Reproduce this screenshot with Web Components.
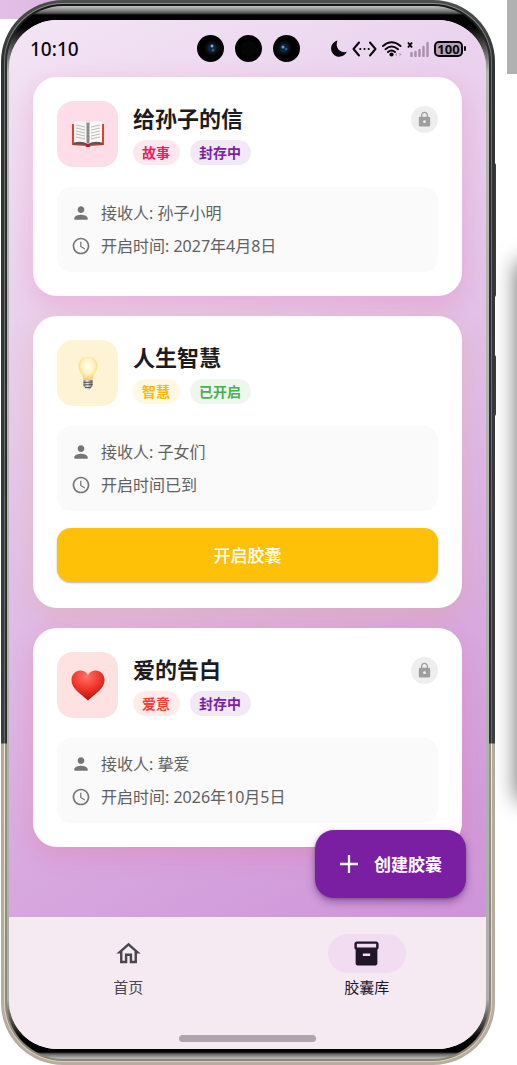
<!DOCTYPE html>
<html lang="zh-CN">
<head>
<meta charset="utf-8">
<meta name="viewport" content="width=device-width, initial-scale=1">
<title>胶囊库</title>
<style>
  * { box-sizing: border-box; }
  body { margin: 0; background: #fff; overflow-x: hidden; font-family: "Noto Sans CJK SC", "Noto Sans", sans-serif; color: #1d1b20; }
</style>
</head>
<body>
<desk-backdrop>
  <phone-frame>
    <status-bar slot="status" time="10:10" battery="100"></status-bar>
    <capsule-list>
      <capsule-card title-text="给孙子的信" kind="story" tag="故事" state="sealed" state-text="封存中" to="接收人: 孙子小明" when="开启时间: 2027年4月8日">
        <emoji-book slot="icon"></emoji-book>
      </capsule-card>
      <capsule-card title-text="人生智慧" kind="wisdom" tag="智慧" state="open" state-text="已开启" to="接收人: 子女们" when="开启时间已到">
        <emoji-bulb slot="icon"></emoji-bulb>
        <open-button slot="action">开启胶囊</open-button>
      </capsule-card>
      <capsule-card title-text="爱的告白" kind="love" tag="爱意" state="sealed" state-text="封存中" to="接收人: 挚爱" when="开启时间: 2026年10月5日">
        <emoji-heart slot="icon"></emoji-heart>
      </capsule-card>
      <create-button slot="fab">创建胶囊</create-button>
    </capsule-list>
    <bottom-nav slot="nav">
      <nav-item icon="home">首页</nav-item>
      <nav-item icon="box" active>胶囊库</nav-item>
    </bottom-nav>
  </phone-frame>
</desk-backdrop>

<script>
function define(name, html, setup) {
  customElements.define(name, class extends HTMLElement {
    constructor() {
      super();
      const root = this.attachShadow({ mode: "open" });
      const tpl = document.createElement("template");
      tpl.innerHTML = "<style>*{box-sizing:border-box}</style>" + html;
      root.append(tpl.content.cloneNode(true));
    }
    connectedCallback() { if (setup) setup(this, this.shadowRoot); }
  });
}

define("desk-backdrop", `
<style>
  :host { display: block; position: relative; padding: 0 22px 0 1px; overflow: hidden; }
  .strip { position: absolute; left: 0; top: 0; width: 108px; height: 19px; background: linear-gradient(90deg, #e3bfe6, #d8b0e0); }
  .block { position: absolute; right: 0; top: 0; width: 10px; height: 74px; background: #b1b1b1; }
  .neighbour { position: absolute; left: 100%; top: 262px; width: 40px; height: 538px; box-shadow: 0 0 22px 0 rgba(0,0,0,.6); }
  .rocker { position: absolute; right: 21px; width: 4px; background: #3a3d40; border-radius: 2px; }
  .up { top: 163px; height: 134px; }
  .power { top: 355px; height: 61px; }
  .front { position: relative; }
</style>
<div class="strip"></div><div class="block"></div><div class="neighbour"></div>
<div class="rocker up"></div><div class="rocker power"></div>
<div class="front"><slot></slot></div>`);

define("phone-frame", `
<style>
  :host { display: block; }
  .shell { border-radius: 62px; padding: 3px;
    background: linear-gradient(180deg, #4c4f4d 0, #303234 60px, #3b3d40 743px, #b3aa9b 744px, #b8ae9f 100%); }
  .rim { border-radius: 59px; padding: 1px;
    background: linear-gradient(180deg, #8a8d8b 0, #6d7072 60px, #66696c 740px, #f3ecdf 741px, #d8cfc0 100%); }
  .band { border-radius: 58px; padding: 2px;
    background: linear-gradient(180deg, #151616 0, #2d2f31 60px, #2d2f31 739px, #989080 740px, #8d8576 100%); }
  .bezel { border-radius: 56px; padding: 14px 3px 10px 2px;
    background: linear-gradient(180deg, #c4c4c4 0, #8c8c8c 4px, #555 7px, #000 9px, #000 20px, #b4b6b2 66px, #aeb0ac calc(100% - 60px), #000 calc(100% - 20px), #000 calc(100% - 7px), #666 calc(100% - 5px), #c2c2c2 100%); }
  .screen { position: relative; border-radius: 48px; overflow: hidden; background: #f5eaf2; }
  .view { background: linear-gradient(152deg, #f3e5f5 0%, #e1bee7 50%, #ce93d8 100%); }
</style>
<div class="shell"><div class="rim"><div class="band"><div class="bezel"><div class="screen">
  <div class="view"><slot name="status"></slot><slot></slot></div>
  <slot name="nav"></slot>
</div></div></div></div></div>`);

define("status-bar", `
<style>
  :host { display: grid; grid-template-columns: 1fr auto 1fr; align-items: center; height: 57px; padding: 0 20px 0 21px; color: #0b080c; }
  .time { font: 500 19px/24px "Noto Sans", sans-serif; }
  .cams { display: flex; gap: 11px; }
  .cams svg { display: block; width: 27px; height: 27px; }
  .icons { display: flex; align-items: center; justify-content: flex-end; gap: 5px; }
  .icons svg { display: block; flex: none; }
  .battery { display: flex; align-items: center; }
  .level { width: 29px; height: 16px; border: 2px solid #0b080c; border-radius: 5px; background: #b5a3b8; text-align: center; font: 700 13px/12px "Noto Sans", sans-serif; display: flex; justify-content: center; align-items: center; }
  .cap { width: 2px; height: 5px; margin-left: 1px; background: #0b080c; border-radius: 1px; }
</style>
<span class="time"></span>
<div class="cams">
  <svg viewBox="0 0 27 27"><circle cx="13.500" cy="13.500" r="13.500"/><circle cx="15" cy="13" r="7" fill="#0a0e13"/><circle cx="15" cy="13" r="4.500" fill="#10233a"/><circle cx="15" cy="11" r="1.500" fill="#6fb0e8"/><circle cx="16" cy="15" r="1.500" fill="#275b94"/></svg>
  <svg viewBox="0 0 27 27"><circle cx="13.500" cy="13.500" r="13.500"/><circle cx="13.500" cy="13.500" r="8" fill="#050505"/></svg>
  <svg viewBox="0 0 27 27"><circle cx="13.500" cy="13.500" r="13.500"/><circle cx="11" cy="13" r="7" fill="#0a0e13"/><circle cx="11" cy="13" r="4.500" fill="#10233a"/><circle cx="10" cy="12" r="1.500" fill="#5f9dd8"/><circle cx="13" cy="14" r="1.300" fill="#275b94"/></svg>
</div>
<div class="icons">
  <svg width="16" height="17" viewBox="0 0 16 17"><path d="M6.500 0.500A8.200 8.200 0 1 0 15.800 11.800C9.500 13.800 3.500 7.500 6.500 0.500Z" fill="currentColor"/></svg>
  <svg width="25" height="16" viewBox="0 0 25 16"><path d="M7 1.500L1.500 8L7 14.500M18 1.500L23.500 8L18 14.500" fill="none" stroke="currentColor" stroke-width="2" stroke-linecap="round" stroke-linejoin="round"/><circle cx="8.300" cy="8" r="1.100"/><circle cx="12.500" cy="8" r="1.100"/><circle cx="16.700" cy="8" r="1.100"/></svg>
  <svg width="20" height="16" viewBox="0 0 20 16"><path d="M1 5Q9.500 -2.500 18.500 5M3.500 8.200Q9.500 2.800 16 8.200M6 11Q9.500 8 13 11" fill="none" stroke="currentColor" stroke-width="2" stroke-linecap="round"/><circle cx="9.500" cy="13.500" r="2.100"/><path d="M13 13.500l2-1.500v3zM19.500 13.500l-2-1.500v3z" fill="#a691aa"/></svg>
  <svg width="22" height="16" viewBox="0 0 22 16"><path d="M1 1.500l4 5M5 1.500l-4 5" stroke="currentColor" stroke-width="2"/><path d="M4.500 12v3M8.500 11v4M12.500 9v6M16.500 6v9M20.500 2v13" stroke="#a691aa" stroke-width="2.400" stroke-linecap="round"/></svg>
  <div class="battery"><span class="level"></span><span class="cap"></span></div>
</div>`, (el, root) => {
  root.querySelector(".time").textContent = el.getAttribute("time");
  root.querySelector(".level").textContent = el.getAttribute("battery");
});

define("capsule-list", `
<style>
  :host { display: block; position: relative; padding: 0 24px 70px; }
  .cards { display: flex; flex-direction: column; gap: 20px; }
  .fab { position: absolute; right: 20px; bottom: 19px; }
</style>
<main class="cards"><slot></slot></main>
<div class="fab"><slot name="fab"></slot></div>`);

define("capsule-card", `
<style>
  :host { display: block; --accent: #e91e63; --soft: #fde8ef; --tile: #fddde8; --glow: rgba(233,30,99,.15); }
  :host([kind=wisdom]) { --accent: #ffb900; --soft: #fff8e3; --tile: #fff3d6; --glow: rgba(233,150,70,.18); }
  :host([kind=love]) { --accent: #f44336; --soft: #feebea; --tile: #fde2e1; --glow: rgba(244,67,100,.16); }
  article { padding: 24px; border-radius: 24px; background: #fff; box-shadow: 0 8px 24px 2px var(--glow); }
  header { display: flex; gap: 15px; height: 66px; }
  .tile { display: flex; align-items: center; justify-content: center; width: 61px; border-radius: 16px; background: var(--tile); }
  .text { flex: 1; display: flex; flex-direction: column; gap: 7px; }
  h2 { margin: 0; font-size: 22px; line-height: 32px; font-weight: 700; }
  .tags { display: flex; gap: 10px; }
  .tags span { padding: 0 10px 0 9px; border-radius: 13px; font-size: 14px; line-height: 25px; font-weight: 700; }
  .tag { color: var(--accent); background: var(--soft); }
  .state { color: #7b1fa2; background: #f2e8f6; }
  :host([state=open]) .state { color: #4caf50; background: #edf7ee; }
  .lock { display: flex; align-items: center; justify-content: center; width: 27px; height: 27px; margin-top: 5px; border-radius: 50%; background: #eee; }
  :host([state=open]) .lock { display: none; }
  .info { display: flex; flex-direction: column; gap: 9px; margin-top: 20px; padding: 14px; border-radius: 14px; background: #fafafa; color: #616161; font-family: "Noto Sans", "Noto Sans CJK SC", sans-serif; font-size: 16px; line-height: 24px; }
  .row { display: flex; align-items: center; gap: 10px; }
  .row svg { flex: none; width: 20px; height: 20px; }
  svg { display: block; fill: #757575; }
</style>
<article>
  <header>
    <div class="tile"><slot name="icon"></slot></div>
    <div class="text"><h2></h2><div class="tags"><span class="tag"></span><span class="state"></span></div></div>
    <div class="lock"><svg width="17" height="17" viewBox="0 0 24 24" style="fill:#9e9e9e"><path d="M18 8h-1V6c0-2.760-2.240-5-5-5S7 3.240 7 6v2H6c-1.100 0-2 .9-2 2v10c0 1.100.9 2 2 2h12c1.100 0 2-.9 2-2V10c0-1.100-.9-2-2-2zm-6 9c-1.100 0-2-.9-2-2s.9-2 2-2 2 .9 2 2-.9 2-2 2zm3.100-9H8.900V6c0-1.710 1.390-3.100 3.100-3.100s3.100 1.390 3.100 3.100v2z"/></svg></div>
  </header>
  <div class="info">
    <div class="row"><svg viewBox="0 0 24 24"><path d="M12 12c2.210 0 4-1.790 4-4s-1.790-4-4-4-4 1.790-4 4 1.790 4 4 4zm0 2c-2.670 0-8 1.340-8 4v2h16v-2c0-2.660-5.330-4-8-4z"/></svg><span class="to"></span></div>
    <div class="row"><svg viewBox="0 0 24 24"><path d="M11.990 2C6.470 2 2 6.480 2 12s4.470 10 9.990 10C17.520 22 22 17.520 22 12S17.520 2 11.990 2zM12 20c-4.420 0-8-3.580-8-8s3.580-8 8-8 8 3.580 8 8-3.580 8-8 8zm.5-13H11v6l5.250 3.150.75-1.230-4.500-2.670z"/></svg><span class="when"></span></div>
  </div>
  <slot name="action"></slot>
</article>`, (el, root) => {
  const put = (sel, attr) => { root.querySelector(sel).textContent = el.getAttribute(attr); };
  put("h2", "title-text"); put(".tag", "tag"); put(".state", "state-text"); put(".to", "to"); put(".when", "when");
});

define("open-button", `
<style>
  :host { display: block; padding: 17px 0 2px; }
  button { display: block; width: 100%; height: 54px; padding: 0; border: 0; border-radius: 14px; background: #ffc107; color: #fff; font: inherit; font-size: 17px; font-weight: 500; line-height: 24px; box-shadow: 0 1px 2px rgba(0,0,0,.3); }
</style>
<button type="button"><slot></slot></button>`);

define("create-button", `
<style>
  :host { display: block; }
  button { display: flex; align-items: center; gap: 13px; height: 68px; padding: 0 24px 0 22px; border: 0; border-radius: 19px; background: #7b1fa2; color: #fff; font: inherit; font-size: 17px; font-weight: 700; line-height: 24px; box-shadow: 0 4px 8px rgba(60,20,80,.4), 0 1px 3px rgba(0,0,0,.25); }
  svg { width: 24px; height: 24px; fill: none; stroke: #fff; stroke-width: 2.300; }
</style>
<button type="button"><svg viewBox="0 0 24 24"><path d="M12 3v18M3 12h18"/></svg><slot></slot></button>`);

define("bottom-nav", `
<style>
  :host { display: block; background: #f5eaf2; }
  nav { display: flex; padding: 17px 0 37px; }
  .handle { width: 137px; height: 7px; margin: 0 auto; border-radius: 4px; background: #b0a5ae; }
  .foot { padding-bottom: 7px; }
</style>
<nav><slot></slot></nav><div class="foot"><div class="handle"></div></div>`);

define("nav-item", `
<style>
  :host { flex: 1; display: flex; justify-content: center; color: #49454f; }
  :host([active]) { color: #21152a; }
  a { display: flex; flex-direction: column; align-items: center; gap: 3px; color: inherit; text-decoration: none; font-size: 15px; line-height: 22px; font-weight: 400; }
  .pill { display: flex; align-items: center; justify-content: center; width: 78px; height: 39px; border-radius: 20px; }
  :host([active]) .pill { background: #f1dcf2; }
  svg { width: 29px; height: 29px; fill: currentColor; }
  .box, :host([icon=box]) .home { display: none; }
  :host([icon=box]) .box { display: block; }
</style>
<a href="#"><span class="pill">
  <svg class="home" viewBox="0 0 24 24"><path d="M12 5.690l5 4.500V18h-2v-6H9v6H7v-7.810l5-4.500M12 3L2 12h3v8h6v-6h2v6h6v-8h3L12 3z"/></svg>
  <svg class="box" viewBox="0 0 24 24"><path fill-rule="evenodd" d="M20 2H4C3 2 2 2.900 2 4v3.010c0 .72.43 1.340 1 1.690V20c0 1.100 1.100 2 2 2h14c.9 0 2-.9 2-2V8.700c.57-.35 1-.97 1-1.690V4c0-1.100-1-2-2-2zm-5 12H9v-2h6v2zm5-7H4V4h16v3z"/></svg>
</span><span><slot></slot></span></a>`);

define("emoji-book", `
<style>:host { display: block } svg { display: block }</style>
<svg width="34" height="28" viewBox="0 0 34 28" aria-hidden="true">
  <path d="M1 4h32v21l-13 1q-3 2-6 0L1 25z" fill="#d8422f"/>
  <path d="M2 23q9-3 15 1 6-4 15-1v2q-9-2-15 1-6-3-15-1z" fill="#5d5552"/>
  <path d="M3 1.500Q12 0 17 3v21Q11 20.500 3 22.500z" fill="#f4f4f2"/><path d="M31 1.500Q22 0 17 3v21Q23 20.500 31 22.500z" fill="#f8f8f6"/>
  <path d="M15.500 2l1.500 1 1.500-1v21L17 24l-1.500-1z" fill="#8b8b8b"/>
  <path d="M5 5l9 2M5 8l9 2M5 11l9 2M5 14l9 2M5 17l9 2M29 5l-9 2M29 8l-9 2M29 11l-9 2M29 14l-9 2M29 17l-9 2" fill="none" stroke="#bdbdbd" stroke-width="1"/>
  <rect x="15" y="24" width="4" height="3" rx="1" fill="#b3261e"/>
</svg>`);

define("emoji-bulb", `
<style>:host { display: block } svg { display: block }</style>
<svg width="20" height="34" viewBox="0 0 20 34" aria-hidden="true">
  <defs><radialGradient id="g" cx=".5" cy=".4" r=".6"><stop offset="0" stop-color="#fffef2"/><stop offset=".55" stop-color="#fff3bd"/><stop offset="1" stop-color="#f3cf66"/></radialGradient>
  <linearGradient id="m"><stop offset="0" stop-color="#777"/><stop offset=".4" stop-color="#eee"/><stop offset="1" stop-color="#666"/></linearGradient></defs>
  <path d="M10 .5C4.500.5.500 4.500.500 10c0 4.500 2.700 6.500 4 10 .5 1.500.6 3 1.500 4h8c.9-1 1-2.500 1.500-4 1.300-3.500 4-5.500 4-10C19.500 4.500 15.500.5 10 .5z" fill="url(#g)"/>
  <path d="M5.500 24h9v6l-3 3.500h-3l-3-3.500z" fill="url(#m)"/><path d="M5.500 26.500l9-.5M5.500 29l9-.5M7 31.500h6" stroke="#555" stroke-width="1"/>
</svg>`);

define("emoji-heart", `
<style>:host { display: block } svg { display: block }</style>
<svg width="34" height="31" viewBox="0 0 34 31" aria-hidden="true">
  <defs><radialGradient id="h" cx=".45" cy=".2" r=".8"><stop offset="0" stop-color="#ff7565"/><stop offset=".5" stop-color="#f2392d"/><stop offset="1" stop-color="#b80f08"/></radialGradient></defs>
  <path d="M17 5C15 1.500 12 .5 9.500.5 4.500.5.500 4.500.500 10c0 9 9 13.500 16.500 20.500C24.500 23.500 33.500 19 33.500 10c0-5.500-4-9.500-9-9.500C22 .5 19 1.500 17 5z" fill="url(#h)"/>
</svg>`);
</script>
</body>
</html>
